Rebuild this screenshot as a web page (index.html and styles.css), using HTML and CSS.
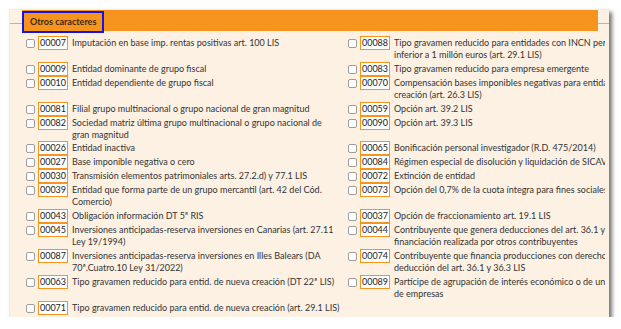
FILE: index.html
```html
<!DOCTYPE html>
<html lang="es">
<head>
    <meta charset="UTF-8">
    <meta name="viewport" content="width=device-width, initial-scale=1.0">
    <title>Otros caracteres</title>
    <link rel="stylesheet" href="styles.css">
</head>
<body>
    <div class="card">
        <div class="card-head">
            <div class="head-bar"><span class="head-title">Otros caracteres</span></div>
        </div>

        <div class="card-body">
            <div class="item-grid">
                <div class="item"><span class="check"></span><span class="code">00007</span><span class="label">Imputación en base imp. rentas positivas art. 100 LIS</span></div>
                <div class="item"><span class="check"></span><span class="code">00088</span><span class="label nowrap">Tipo gravamen reducido para entidades con INCN período impositivo<br>inferior a 1 millón euros (art. 29.1 LIS)</span></div>

                <div class="item"><span class="check"></span><span class="code">00009</span><span class="label">Entidad dominante de grupo fiscal</span></div>
                <div class="item"><span class="check"></span><span class="code">00083</span><span class="label">Tipo gravamen reducido para empresa emergente</span></div>

                <div class="item"><span class="check"></span><span class="code">00010</span><span class="label">Entidad dependiente de grupo fiscal</span></div>
                <div class="item"><span class="check"></span><span class="code">00070</span><span class="label nowrap">Compensación bases imponibles negativas para entidades de nueva<br>creación (art. 26.3 LIS)</span></div>

                <div class="item"><span class="check"></span><span class="code">00081</span><span class="label">Filial grupo multinacional o grupo nacional de gran magnitud</span></div>
                <div class="item"><span class="check"></span><span class="code">00059</span><span class="label">Opción art. 39.2 LIS</span></div>

                <div class="item"><span class="check"></span><span class="code">00082</span><span class="label">Sociedad matriz última grupo multinacional o grupo nacional de gran magnitud</span></div>
                <div class="item"><span class="check"></span><span class="code">00090</span><span class="label">Opción art. 39.3 LIS</span></div>

                <div class="item"><span class="check"></span><span class="code">00026</span><span class="label">Entidad inactiva</span></div>
                <div class="item"><span class="check"></span><span class="code">00065</span><span class="label">Bonificación personal investigador (R.D. 475/2014)</span></div>

                <div class="item"><span class="check"></span><span class="code">00027</span><span class="label">Base imponible negativa o cero</span></div>
                <div class="item"><span class="check"></span><span class="code">00084</span><span class="label nowrap">Régimen especial de disolución y liquidación de SICAV (DT 41ª LIS)</span></div>

                <div class="item"><span class="check"></span><span class="code">00030</span><span class="label">Transmisión elementos patrimoniales arts. 27.2.d) y 77.1 LIS</span></div>
                <div class="item"><span class="check"></span><span class="code">00072</span><span class="label">Extinción de entidad</span></div>

                <div class="item"><span class="check"></span><span class="code">00039</span><span class="label">Entidad que forma parte de un grupo mercantil (art. 42 del Cód. Comercio)</span></div>
                <div class="item"><span class="check"></span><span class="code">00073</span><span class="label">Opción del 0,7% de la cuota íntegra para fines sociales</span></div>

                <div class="item"><span class="check"></span><span class="code">00043</span><span class="label">Obligación información DT 5ª RIS</span></div>
                <div class="item"><span class="check"></span><span class="code">00037</span><span class="label">Opción de fraccionamiento art. 19.1 LIS</span></div>

                <div class="item"><span class="check"></span><span class="code">00045</span><span class="label">Inversiones anticipadas-reserva inversiones en Canarias (art. 27.11 Ley 19/1994)</span></div>
                <div class="item"><span class="check"></span><span class="code">00044</span><span class="label nowrap">Contribuyente que genera deducciones del art. 36.1 y 36.2 LIS por la<br>financiación realizada por otros contribuyentes</span></div>

                <div class="item"><span class="check"></span><span class="code">00087</span><span class="label">Inversiones anticipadas-reserva inversiones en Illes Balears (DA 70ª.Cuatro.10 Ley 31/2022)</span></div>
                <div class="item"><span class="check"></span><span class="code">00074</span><span class="label nowrap">Contribuyente que financia producciones con derecho a la<br>deducción del art. 36.1 y 36.3 LIS</span></div>

                <div class="item"><span class="check"></span><span class="code">00063</span><span class="label nowrap">Tipo gravamen reducido para entid. de nueva creación (DT 22ª LIS)</span></div>
                <div class="item"><span class="check"></span><span class="code">00089</span><span class="label nowrap">Partícipe de agrupación de interés económico o de unión temporal<br>de empresas</span></div>

                <div class="item"><span class="check"></span><span class="code">00071</span><span class="label nowrap">Tipo gravamen reducido para entid. de nueva creación (art. 29.1 LIS)</span></div>
            </div>
        </div>
    </div>
</body>
</html>
```

FILE: styles.css
```css
body {
    margin: 0;
    background-color: #ffffff;
    font-family: "Lato", "Liberation Sans", sans-serif;
    font-size: 9px;
    color: #333333;
}

.card {
    margin: 9px 0 0 9px;
    width: 600px;
    height: 308px;
    background-color: #fdf1e4;
    border-top: 1px solid #f1ece6;
    border-left: 1px solid #f1ece6;
    box-sizing: border-box;
    box-shadow: 3px 3px 4px rgba(0, 0, 0, 0.55);
}

/* header: grey rule running behind the orange bar */
.card-head {
    height: 23px;
    padding: 0 11px 0 12px;
    background: linear-gradient(#b9b4ae, #b9b4ae) 0 13px / 100% 1px no-repeat;
}
.head-bar {
    height: 21px;
    background-color: #f7941e;
    display: flex;
    align-items: flex-start;
}
.head-title {
    margin-top: 1px;
    height: 22px;
    padding: 0 6px;
    box-sizing: border-box;
    border: 2px solid #1414e6;
    line-height: 18px;
    font-weight: bold;
    color: #3a2b1b;
}

.card-body {
    margin-right: 4px;
    padding: 3px 0 0 14px;
    overflow: hidden;
}
.item-grid {
    display: grid;
    grid-template-columns: 322px 322px;
}
.item {
    display: flex;
    align-items: flex-start;
    padding-left: 2px;
}
.check {
    flex: none;
    width: 9px;
    height: 9px;
    margin-top: 3px;
    box-sizing: border-box;
    border: 1px solid #9d9d9d;
    border-radius: 2px;
    background-color: #ffffff;
}
.code {
    flex: none;
    width: 30px;
    margin-left: 3px;
    box-sizing: border-box;
    border: 1px solid #f7941e;
    background-color: #ffffff;
    line-height: 12px;
    text-align: center;
    color: #222222;
}
.label {
    flex: none;
    width: 264px;
    margin-left: 4px;
    padding: 1px 0;
    line-height: 11.9px;
}
.nowrap {
    white-space: nowrap;
}
```
